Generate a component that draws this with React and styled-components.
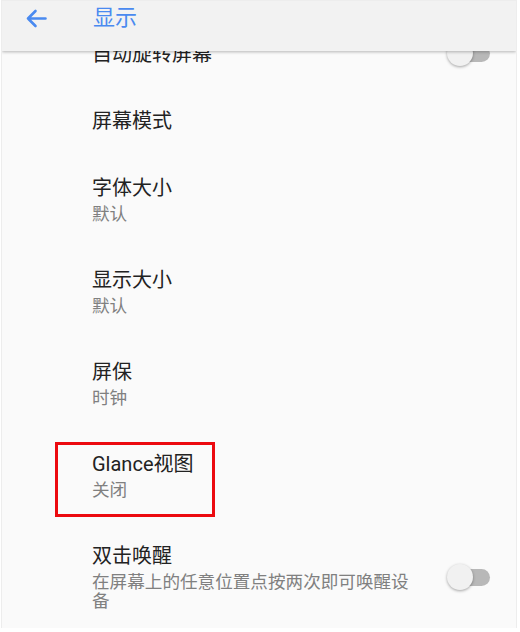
import React from 'react';
import styled, { createGlobalStyle } from 'styled-components';

const GlobalStyle = createGlobalStyle`
  html, body {
    margin: 0;
    padding: 0;
    background: #ffffff;
  }
  body {
    font-family: Roboto, "Noto Sans CJK SC", sans-serif;
  }
`;

const Screen = styled.div`
  position: relative;
  width: 514px;
  height: 627px;
  margin: 1px 0 0 2px;
  background: #fafafa;
  box-shadow: 0 0 0 1px #ededed;
  overflow: hidden;
`;

const Toolbar = styled.div`
  position: absolute;
  top: 0;
  left: 0;
  right: 0;
  z-index: 2;
  height: 50px;
  display: flex;
  align-items: flex-start;
  padding: 6px 0 0 23px;
  box-sizing: border-box;
  background: #f2f2f2;
  box-shadow: 0 1px 3px rgba(0, 0, 0, 0.28);
`;

const BackButton = styled.div`
  width: 22px;
  height: 21px;
  display: flex;
  align-items: center;
  margin-top: 1px;
`;

const ToolbarTitle = styled.div`
  margin-left: 46px;
  font-size: 22px;
  line-height: 22px;
  color: #4a8af0;
`;

const List = styled.div`
  padding-top: 19px;
`;

const Item = styled.div`
  position: relative;
  display: flex;
  align-items: center;
  min-height: ${(p) => (p.$tall ? 92 : 67)}px;
  padding: ${(p) => (p.$tall ? '22px' : '0')} 26px ${(p) => (p.$tall ? '22px' : '0')} 90px;
  box-sizing: border-box;
`;

const Texts = styled.div`
  flex: 1;
  display: flex;
  flex-direction: column;
`;

const Title = styled.div`
  font-size: 20px;
  line-height: 24px;
  color: #222222;
`;

const Subtitle = styled.div`
  margin-top: 5px;
  max-width: 326px;
  font-size: 17.6px;
  line-height: 18.5px;
  color: #808080;
`;

const Toggle = styled.div`
  position: relative;
  width: 43px;
  height: 27px;
  margin-left: 20px;
  flex-shrink: 0;
`;

const Track = styled.div`
  position: absolute;
  right: 0;
  top: 5px;
  width: 38px;
  height: 17px;
  border-radius: 9px;
  background: #b8b8b8;
`;

const Thumb = styled.div`
  position: absolute;
  left: 0;
  top: 0;
  width: 26px;
  height: 26px;
  border-radius: 50%;
  background: #f1f1f1;
  box-shadow: 0 1px 3px rgba(0, 0, 0, 0.35);
`;

const Highlight = styled.div`
  position: absolute;
  left: 53px;
  top: 12px;
  width: 160px;
  height: 75px;
  box-sizing: border-box;
  border: 3px solid #ec0a0f;
  pointer-events: none;
`;

const BackArrow = () => (
  <svg width="22" height="19" viewBox="0 0 22 19" fill="none">
    <path
      d="M20.5 9.5H3M10.5 2L3 9.5L10.5 17"
      stroke="#4a8af0"
      strokeWidth="2.6"
      strokeLinecap="round"
      strokeLinejoin="round"
    />
  </svg>
);

const Switch = () => (
  <Toggle>
    <Track />
    <Thumb />
  </Toggle>
);

const items = [
  { title: '自动旋转屏幕', toggle: true },
  { title: '屏幕模式' },
  { title: '字体大小', sub: '默认' },
  { title: '显示大小', sub: '默认' },
  { title: '屏保', sub: '时钟' },
  { title: 'Glance视图', sub: '关闭', marked: true },
  { title: '双击唤醒', sub: '在屏幕上的任意位置点按两次即可唤醒设备', toggle: true },
];

const App = () => (
  <>
    <GlobalStyle />
    <Screen>
      <Toolbar>
        <BackButton>
          <BackArrow />
        </BackButton>
        <ToolbarTitle>显示</ToolbarTitle>
      </Toolbar>
      <List>
        {items.map((item) => (
          <Item key={item.title} $tall={!!item.sub}>
            <Texts>
              <Title>{item.title}</Title>
              {item.sub && <Subtitle>{item.sub}</Subtitle>}
            </Texts>
            {item.toggle && <Switch />}
            {item.marked && <Highlight />}
          </Item>
        ))}
      </List>
    </Screen>
  </>
);

export default App;
